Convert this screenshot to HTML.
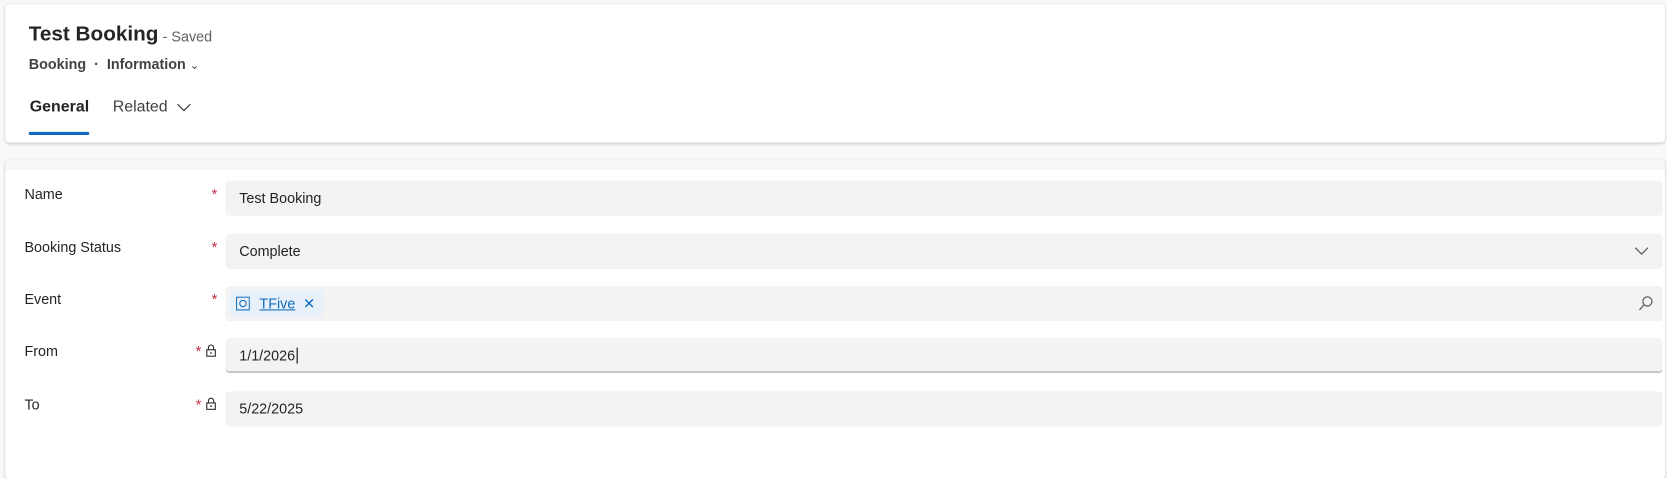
<!DOCTYPE html>
<html><head><style>
body{margin:0;width:1667px;height:437px;background:#faf9f8;font-family:"Segoe UI","Liberation Sans",sans-serif;overflow:hidden;color:#242424}
#w{position:absolute;left:0;top:0;width:1568px;height:411px;transform:scale(1.0632);transform-origin:0 0}
.card{position:absolute;background:#fff;border-radius:4px;box-shadow:0 1px 3px rgba(0,0,0,.18)}
.abs{position:absolute;white-space:nowrap}
.lbl{position:absolute;left:23px;font-size:13.5px;color:#242424}
.star{position:absolute;left:199px;color:#c4314b;font-size:14px}
.f{position:absolute;left:212px;width:1352px;height:33px;background:#f3f3f3;border-radius:4px;font-size:13.5px;line-height:33px;box-sizing:border-box;padding-left:13px}
</style></head><body><div id="w">
<div class="card" style="left:5px;top:4px;width:1561px;height:130px"></div>
<div class="abs" style="left:27px;top:21px;font-size:19.5px;font-weight:600">Test Booking</div>
<div class="abs" style="left:153px;top:27px;font-size:13.5px;color:#616161">- Saved</div>
<div class="abs" style="left:27px;top:53px;font-size:13.5px;color:#424242;font-weight:600">Booking &nbsp;· &nbsp;Information <span style="font-weight:400;font-size:11px">&#8964;</span></div>
<div class="abs" style="left:28px;top:92px;font-size:15px;font-weight:600">General</div>
<div class="abs" style="left:27px;top:124px;width:57px;height:3px;background:#0f6cbd;border-radius:2px"></div>
<div class="abs" style="left:106px;top:92px;font-size:15px;color:#424242">Related</div>
<svg class="abs" style="left:166px;top:97px" width="14" height="9"><path d="M1 1l6 6 6-6" fill="none" stroke="#424242" stroke-width="1.2"/></svg>
<div class="card" style="left:5px;top:150px;width:1561px;height:300px;border-top:10px solid #f6f6f6;box-sizing:border-box"></div>
<div class="lbl" style="top:175px">Name</div><div class="star" style="top:174px">*</div>
<div class="f" style="top:170px">Test Booking</div>
<div class="lbl" style="top:225px">Booking Status</div><div class="star" style="top:224px">*</div>
<div class="f" style="top:220px">Complete<svg style="position:absolute;right:13px;top:12px" width="14" height="9"><path d="M1 1l6 6 6-6" fill="none" stroke="#616161" stroke-width="1.2"/></svg></div>
<div class="lbl" style="top:274px">Event</div><div class="star" style="top:273px">*</div>
<div class="f" style="top:269px;padding-left:0">
<div style="position:absolute;left:4px;top:4px;width:88px;height:25px;background:#e8f0fa;border-radius:4px"></div>
<svg style="position:absolute;left:10px;top:10px" width="13" height="13"><rect x=".5" y=".5" width="12" height="12" fill="none" stroke="#0f6cbd"/><circle cx="6.5" cy="6.5" r="3" fill="none" stroke="#0f6cbd"/></svg>
<span style="position:absolute;left:32px;top:0;color:#0f6cbd;text-decoration:underline">TFive</span>
<span style="position:absolute;left:73px;top:0;color:#0f6cbd">✕</span>
<svg style="position:absolute;right:9px;top:9px" width="14" height="15"><circle cx="8.5" cy="5.5" r="4.3" fill="none" stroke="#616161" stroke-width="1.2"/><path d="M5.5 8.5L1 13.5" stroke="#616161" stroke-width="1.2"/></svg></div>
<div class="lbl" style="top:323px">From</div><div class="star" style="top:322px;left:184px">*</div>
<svg class="abs" style="left:193px;top:323px" width="11" height="13"><path d="M3 6V4a2.5 2.5 0 015 0v2" fill="none" stroke="#242424"/><rect x="1.5" y="6" width="8" height="6" fill="none" stroke="#242424"/><circle cx="5.5" cy="9" r=".8" fill="#242424"/></svg>
<div class="f" style="top:318px;border-bottom:2px solid #c8c8c8">1/1/2026<span style="border-left:1px solid #000;margin-left:1px"></span></div>
<div class="lbl" style="top:373px">To</div><div class="star" style="top:372px;left:184px">*</div>
<svg class="abs" style="left:193px;top:373px" width="11" height="13"><path d="M3 6V4a2.5 2.5 0 015 0v2" fill="none" stroke="#242424"/><rect x="1.5" y="6" width="8" height="6" fill="none" stroke="#242424"/><circle cx="5.5" cy="9" r=".8" fill="#242424"/></svg>
<div class="f" style="top:368px">5/22/2025</div>
</div></body></html>
